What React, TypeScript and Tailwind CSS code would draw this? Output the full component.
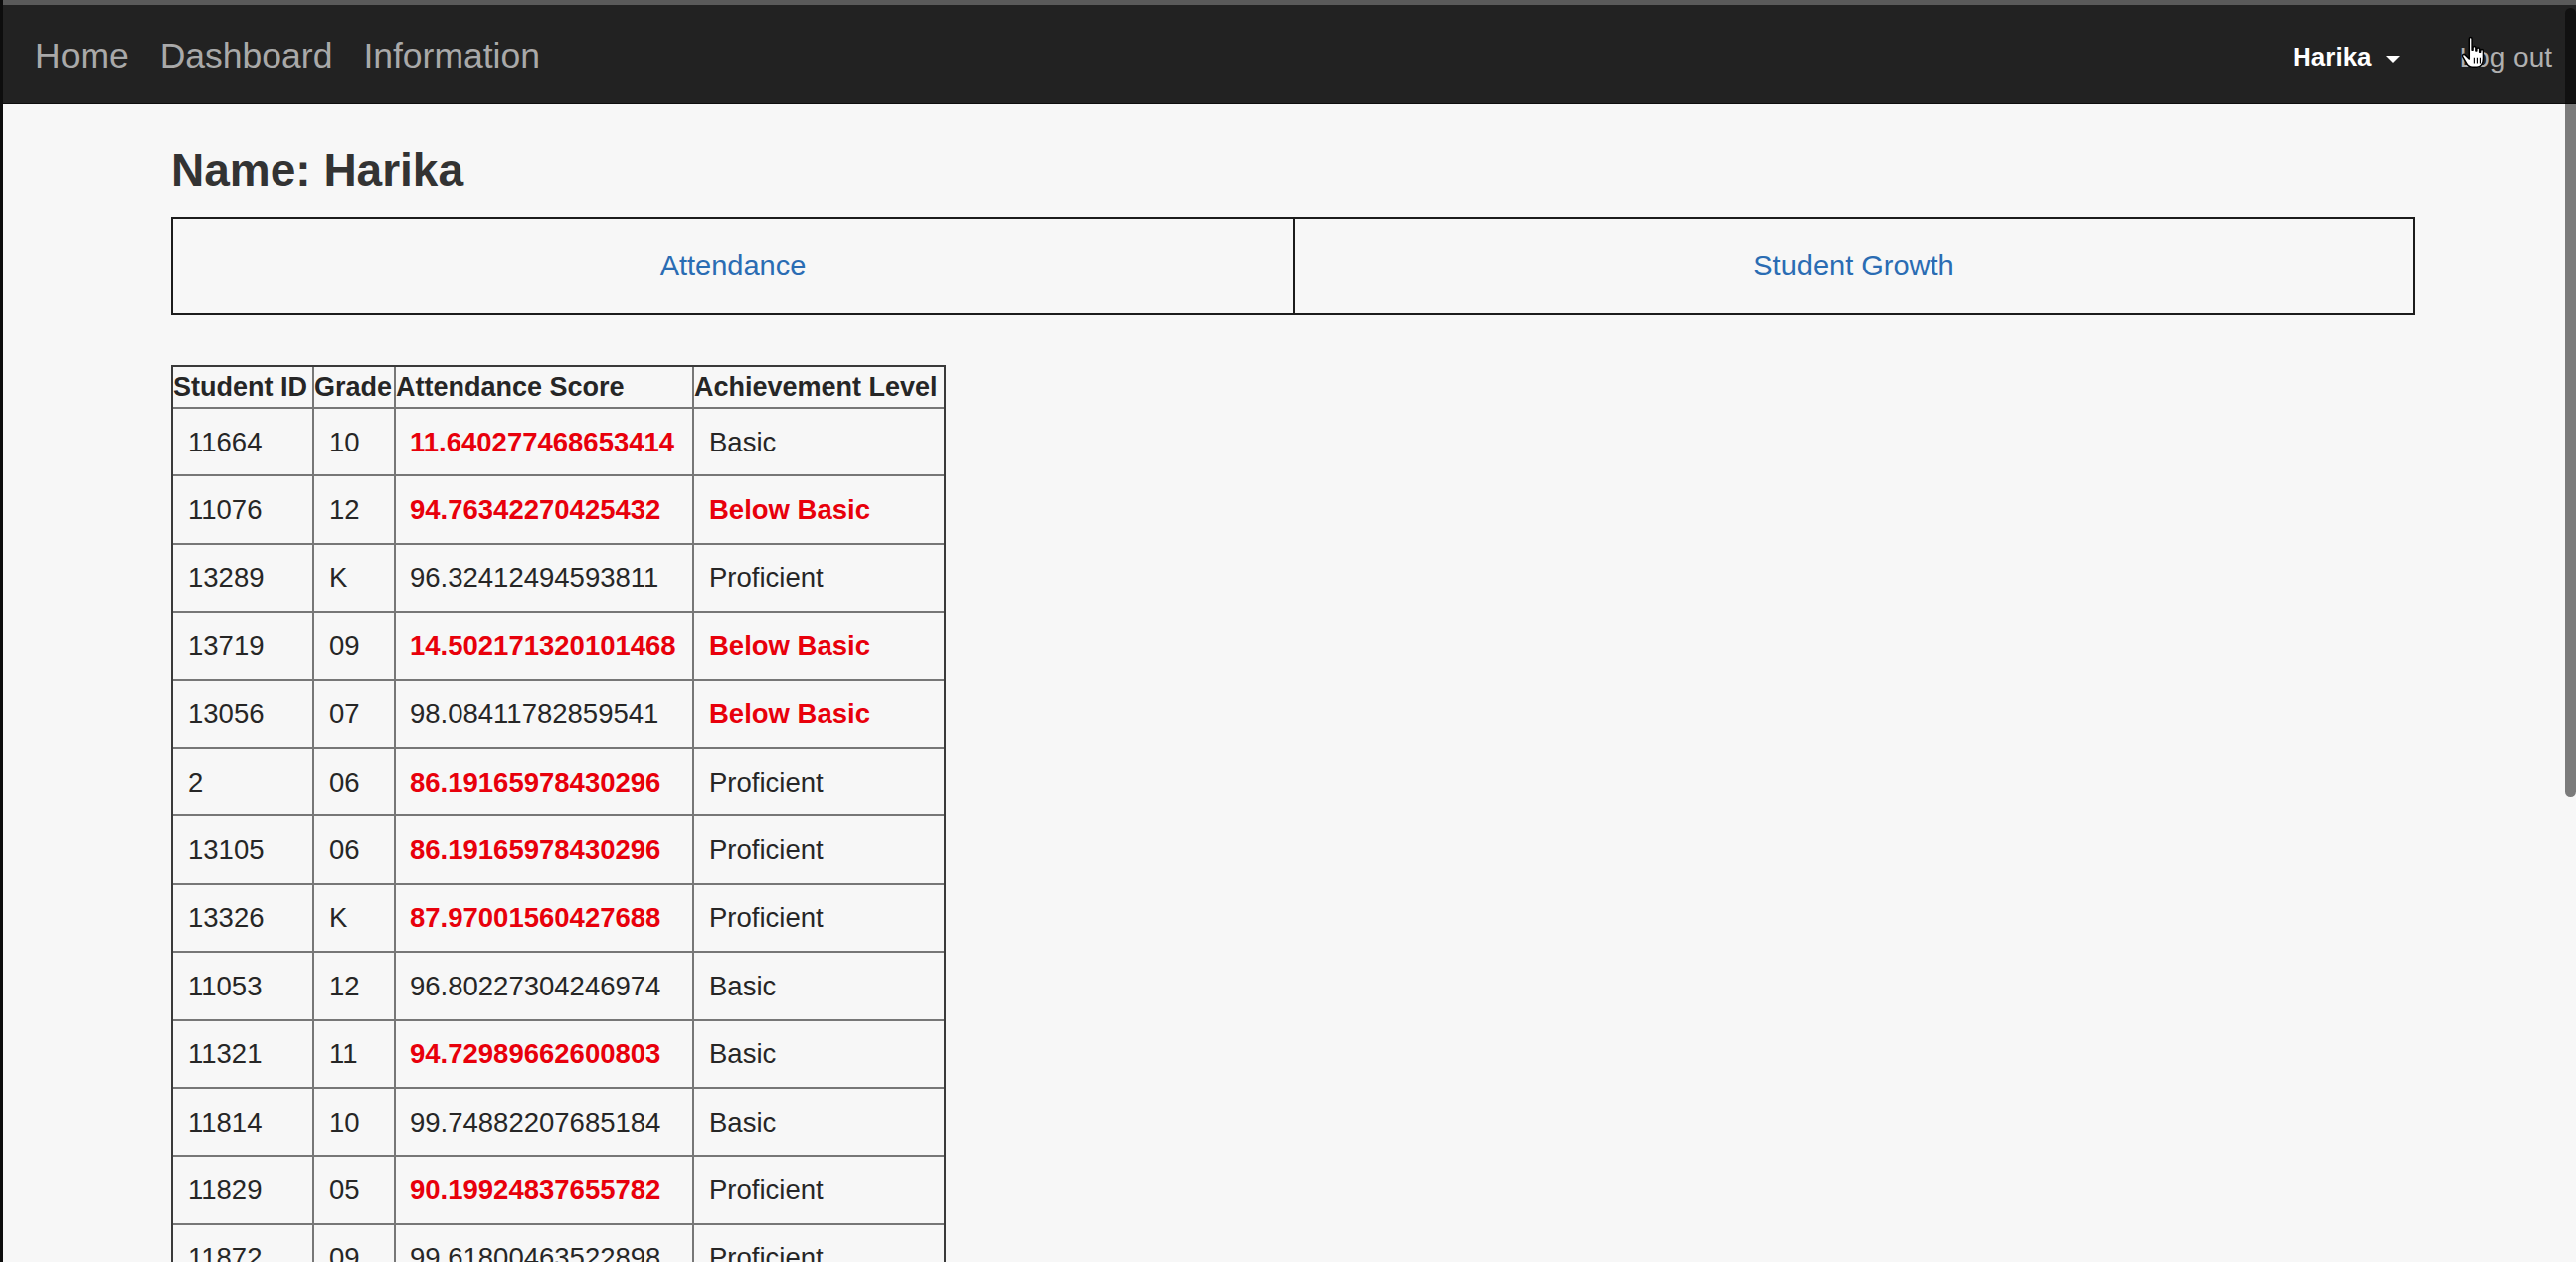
import React from "react";

interface Row {
  id: string;
  grade: string;
  score: string;
  scoreLow: boolean;
  level: string;
}

const rows: Row[] = [
  { id: "11664", grade: "10", score: "11.640277468653414", scoreLow: true, level: "Basic" },
  { id: "11076", grade: "12", score: "94.76342270425432", scoreLow: true, level: "Below Basic" },
  { id: "13289", grade: "K", score: "96.32412494593811", scoreLow: false, level: "Proficient" },
  { id: "13719", grade: "09", score: "14.502171320101468", scoreLow: true, level: "Below Basic" },
  { id: "13056", grade: "07", score: "98.08411782859541", scoreLow: false, level: "Below Basic" },
  { id: "2", grade: "06", score: "86.19165978430296", scoreLow: true, level: "Proficient" },
  { id: "13105", grade: "06", score: "86.19165978430296", scoreLow: true, level: "Proficient" },
  { id: "13326", grade: "K", score: "87.97001560427688", scoreLow: true, level: "Proficient" },
  { id: "11053", grade: "12", score: "96.80227304246974", scoreLow: false, level: "Basic" },
  { id: "11321", grade: "11", score: "94.72989662600803", scoreLow: true, level: "Basic" },
  { id: "11814", grade: "10", score: "99.74882207685184", scoreLow: false, level: "Basic" },
  { id: "11829", grade: "05", score: "90.19924837655782", scoreLow: true, level: "Proficient" },
  { id: "11872", grade: "09", score: "99.61800463522898", scoreLow: false, level: "Proficient" },
];

const red = "font-bold text-[#e8000b]";

const HandCursor = () => (
  <svg
    className="absolute left-[2470px] top-[36px] h-[34px] w-[28px]"
    viewBox="0 0 14 18"
  >
    <path
      d="M4.5 1.6C4.5 0.6 6 0.6 6 1.6V7.5H6.5V6.2C6.5 5.4 8 5.4 8 6.2V8H8.5V6.9C8.5 6.1 10 6.1 10 6.9V8.6H10.5V7.8C10.5 7 12 7 12 7.8V12.2C12 14.6 10.6 16.6 8.6 16.6H6.2C4.8 16.6 3.8 15.8 3 14.4L1 10.9C0.6 10.1 1.6 9.3 2.3 10L4.5 12.2Z"
      fill="#fff"
      stroke="#000"
      strokeWidth="0.8"
      strokeLinejoin="round"
    />
    <path d="M7.2 11.5V14.5M8.8 11.5V14.5M10.4 11.5V14.5" stroke="#000" strokeWidth="0.6" />
  </svg>
);

const App = () => {
  return (
    <div className="relative h-screen overflow-hidden border-l-[3px] border-[#0d0d0d] bg-[#f7f7f7] font-['Liberation_Sans',Arial,sans-serif]">
      <div className="h-[5px] bg-[#5a5a5a]" />
      <nav className="flex h-[100px] items-center border-b border-[#0e0e0e] bg-[#222222] pt-[4px]">
        <div className="flex items-center gap-[31px] pl-[32px] text-[35.5px] text-[#a9a9a9]">
          <span>Home</span>
          <span>Dashboard</span>
          <span>Information</span>
        </div>
        <div className="ml-auto flex items-center pr-[24px] pt-[2px]">
          <span className="text-[26px] font-bold text-white">
            Harika
            <span className="ml-[14px] inline-block h-0 w-0 border-x-[7px] border-t-[7px] border-x-transparent border-t-white align-middle" />
          </span>
          <span className="ml-[60px] text-[28px] text-[#b0b0b0]">Log out</span>
        </div>
      </nav>

      <div className="ml-[169px] w-[2256px]">
        <h1 className="mt-[41px] text-[46px] font-bold leading-[1.1] text-[#333333]">
          Name: Harika
        </h1>

        <div className="mt-[21px] grid h-[99px] grid-cols-2 border-2 border-[#1c1c1c] pt-[2px] text-[29px] text-[#2a6cb3]">
          <div className="flex items-center justify-center">Attendance</div>
          <div className="-mt-[2px] flex items-center justify-center border-l-2 border-[#1c1c1c] pt-[2px]">
            Student Growth
          </div>
        </div>

        <div className="mt-[50px] w-fit border-2 border-[#3a3a3a]">
          <table className="table-fixed border-separate border-spacing-0 text-left text-[#262626]">
            <thead>
              <tr className="text-[27px] font-bold">
                <th className="h-[38px] w-[142px] whitespace-nowrap border-b-2 border-r-2 border-[#777777] font-bold">
                  Student ID
                </th>
                <th className="h-[38px] w-[82px] whitespace-nowrap border-b-2 border-r-2 border-[#777777] font-bold">
                  Grade
                </th>
                <th className="h-[38px] w-[300px] whitespace-nowrap border-b-2 border-r-2 border-[#777777] font-bold">
                  Attendance Score
                </th>
                <th className="h-[38px] w-[251px] whitespace-nowrap border-b-2 border-[#777777] font-bold">
                  Achievement Level
                </th>
              </tr>
            </thead>
            <tbody className="text-[27.5px]">
              {rows.map((r, i) => (
                <tr key={i}>
                  <td className="h-[68.4px] border-b-2 border-r-2 border-[#777777] pl-[15px] align-middle">
                    {r.id}
                  </td>
                  <td className="h-[68.4px] border-b-2 border-r-2 border-[#777777] pl-[15px] align-middle">
                    {r.grade}
                  </td>
                  <td
                    className={`h-[68.4px] whitespace-nowrap border-b-2 border-r-2 border-[#777777] pl-[14px] align-middle ${
                      r.scoreLow ? red : ""
                    }`}
                  >
                    {r.score}
                  </td>
                  <td
                    className={`h-[68.4px] whitespace-nowrap border-b-2 border-[#777777] pl-[15px] align-middle ${
                      r.level === "Below Basic" ? red : ""
                    }`}
                  >
                    {r.level}
                  </td>
                </tr>
              ))}
            </tbody>
          </table>
        </div>
      </div>

      {/* overlay scrollbar thumb */}
      <div className="absolute right-0 top-[8px] h-[793px] w-[11px] rounded-full bg-black/50" />
      <HandCursor />
    </div>
  );
};

export default App;
